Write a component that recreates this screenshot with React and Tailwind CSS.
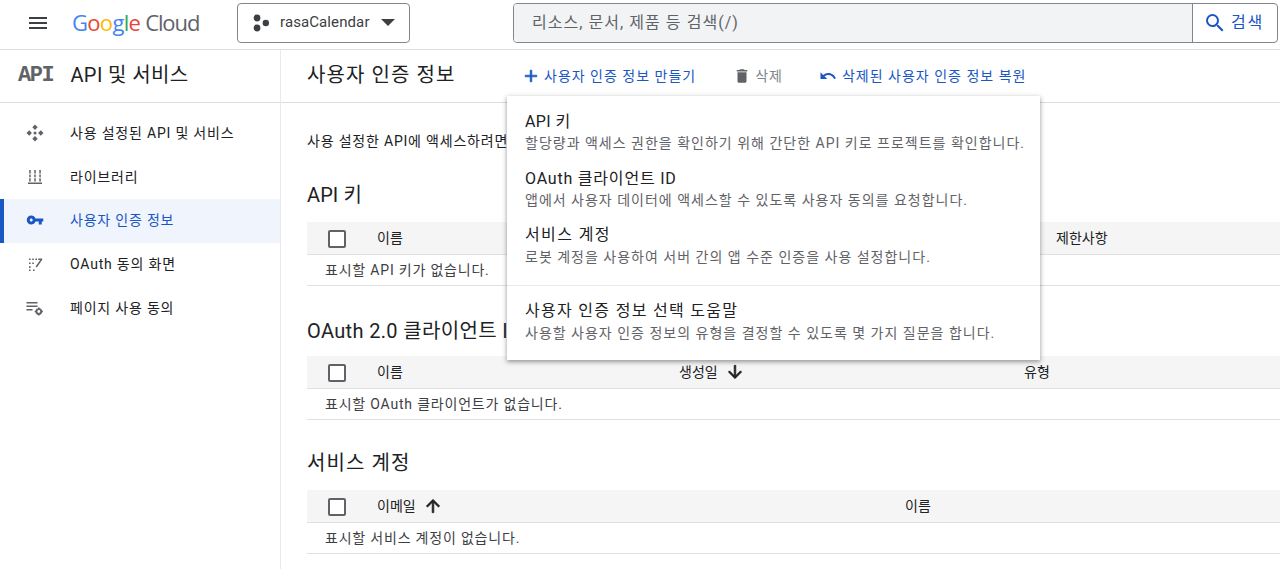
import React from 'react';

const font = "font-['Roboto','Noto_Sans_CJK_KR',sans-serif]";

const navItems = [
  { label: '사용 설정된 API 및 서비스', icon: 'api' },
  { label: '라이브러리', icon: 'library' },
  { label: '사용자 인증 정보', icon: 'key', active: true, cls: 'pb-[2px]' },
  { label: 'OAuth 동의 화면', icon: 'consent', cls: 'pb-[2px]' },
  { label: '페이지 사용 동의', icon: 'settings', cls: 'pb-[2px]' },
];

const menuItems = [
  { title: 'API 키', titleCls: 'tracking-[0.4px]', desc: '할당량과 액세스 권한을 확인하기 위해 간단한 API 키로 프로젝트를 확인합니다.', cls: 'h-[57px] pt-[14px]' },
  { title: 'OAuth 클라이언트 ID', titleCls: 'tracking-[0.8px]', desc: '앱에서 사용자 데이터에 액세스할 수 있도록 사용자 동의를 요청합니다.', cls: 'h-[57px] pt-[14px]' },
  { title: '서비스 계정', titleCls: 'tracking-[1.4px] mb-[1px]', desc: '로봇 계정을 사용하여 서버 간의 앱 수준 인증을 사용 설정합니다.', cls: 'h-[75px] pt-[13px]' },
];

function Mi({ d, size = 18, bold = false, className = '' }) {
  return (
    <svg width={size} height={size} viewBox="0 0 24 24" fill="currentColor" className={`shrink-0 ${bold ? 'stroke-current stroke-[0.8]' : ''} ${className}`}>
      <path d={d} />
    </svg>
  );
}

const icons = {
  menu: 'M3 18h18v-2H3v2zm0-5h18v-2H3v2zm0-7v2h18V6H3z',
  search: 'M15.5 14h-.79l-.28-.27A6.471 6.471 0 0 0 16 9.5 6.5 6.5 0 1 0 9.5 16c1.61 0 3.09-.59 4.23-1.57l.27.28v.79l5 4.99L20.49 19l-4.99-5zm-6 0C7.01 14 5 11.99 5 9.5S7.01 5 9.5 5 14 7.01 14 9.5 11.99 14 9.5 14z',
  add: 'M19 13h-6v6h-2v-6H5v-2h6V5h2v6h6v2z',
  trash: 'M6 19c0 1.1.9 2 2 2h8c1.1 0 2-.9 2-2V7H6v12zM19 4h-3.5l-1-1h-5l-1 1H5v2h14V4z',
  undo: 'M12.5 8c-2.65 0-5.05.99-6.9 2.6L2 7v9h9l-3.62-3.62c1.39-1.16 3.16-1.88 5.12-1.88 3.54 0 6.55 2.31 7.6 5.5l2.37-.78C21.08 11.03 17.15 8 12.5 8z',
  key: 'M12.65 10C11.83 7.67 9.61 6 7 6c-3.31 0-6 2.69-6 6s2.69 6 6 6c2.61 0 4.83-1.67 5.65-4H17v4h4v-4h2v-4H12.65zM7 14c-1.1 0-2-.9-2-2s.9-2 2-2 2 .9 2 2-.9 2-2 2z',
  down: 'M20 12l-1.41-1.41L13 16.17V4h-2v12.17l-5.58-5.59L4 12l8 8 8-8z',
  up: 'M4 12l1.41 1.41L11 7.83V20h2V7.83l5.58 5.59L20 12l-8-8-8 8z',
};

function NavIcon({ name }) {
  if (name === 'api') {
    return (
      <svg width="18" height="18" viewBox="0 0 18 18" fill="#5f6368">
        <path d="M9 .5l2.7 2.7L9 5.9 6.3 3.2zM9 12.1l2.7 2.7L9 17.5l-2.7-2.7zM3.2 6.3L5.9 9l-2.7 2.7L.5 9zM14.8 6.3L17.5 9l-2.7 2.7L12.1 9z" />
        <circle cx="9" cy="9" r="1.5" />
      </svg>
    );
  }
  if (name === 'library') {
    return (
      <svg width="18" height="18" viewBox="0 0 18 18" fill="#5f6368">
        <path d="M2 14.5h14v1.5H2zM3.2 2h1.5v3.5H3.2zM3.2 6.5h1.5v2.8H3.2zM3.2 10.3h1.5v3.2H3.2zM8.25 2h1.5v3.5h-1.5zM8.25 6.5h1.5v2.8h-1.5zM8.25 10.3h1.5v3.2h-1.5zM13.3 2h1.5v3.5h-1.5zM13.3 6.5h1.5v2.8h-1.5zM13.3 10.3h1.5v3.2h-1.5z" />
      </svg>
    );
  }
  if (name === 'key') return <Mi d={icons.key} className="text-[#1a56c4]" />;
  if (name === 'consent') {
    return (
      <svg width="18" height="18" viewBox="0 0 18 18" fill="#5f6368">
        <path d="M3 3.5h1.6v1.6H3zM6.2 3.5h1.6v1.6H6.2zM9.4 3.5H11v1.6H9.4zM3 7.4h1.6V9H3zM6.2 7.4h1.6V9H6.2zM3 11.3h1.6v1.6H3zM3 14.4h1.6V16H3zM14.6 3.5h1.6v1.3l-5.4 7.6-1.2-.9 4.6-6.4h-2V3.5zM7 14.4h1.6V16H7z" />
      </svg>
    );
  }
  return (
    <svg width="18" height="18" viewBox="0 0 18 18" fill="#5f6368">
      <path d="M.5 3h11v1.5H.5zM.5 6.5h11V8H.5zM.5 10h6v1.5h-6z" />
      <circle cx="12.8" cy="12.5" r="2.4" fill="none" stroke="#5f6368" strokeWidth="1.9" />
      <path d="M12 8.4h1.6v1.7H12zM12 14.9h1.6v1.7H12zM8.7 11.7h1.7v1.6H8.7zM15.2 11.7h1.7v1.6h-1.7z" />
    </svg>
  );
}

function Checkbox() {
  return <span className="block w-[18px] h-[18px] border-2 border-[#5f6368] rounded-[2px] bg-white" />;
}

function HeaderRow({ cols, children }) {
  return (
    <div className={`grid ${cols} items-center h-[33px] bg-[#f5f5f5] border-b border-[#e0e0e0] text-[14px] text-[#202124]`}>
      <div className="pl-[21px] pt-[1px]"><Checkbox /></div>
      {children}
    </div>
  );
}

function EmptyRow({ children }) {
  return (
    <div className="h-[31px] flex items-center pl-[18px] text-[14px] tracking-[0.8px] text-[#3c4043] border-b border-[#e0e0e0]">
      {children}
    </div>
  );
}

export default function App() {
  return (
    <div className={`${font} relative w-[1280px] h-[569px] overflow-hidden bg-white text-[#202124]`}>
      <header className="h-[50px] pb-[4px] flex items-center border-b border-[#dadce0]">
        <Mi d={icons.menu} size={24} className="ml-[26px] text-[#3c4043]" />
        <div className="ml-[22px] w-[165px] flex items-baseline font-['Open_Sans',sans-serif] text-[22px] tracking-[-0.7px] pb-[1px]">
          <span className="text-[#4285f4]">G</span>
          <span className="text-[#ea4335]">o</span>
          <span className="text-[#fbbc04]">o</span>
          <span className="text-[#4285f4]">g</span>
          <span className="text-[#34a853]">l</span>
          <span className="text-[#ea4335]">e</span>
          <span className="ml-[5px] text-[#5f6368] tracking-[-1.1px]">Cloud</span>
        </div>
        <button className="h-[40px] w-[173px] shrink-0 flex items-center border border-[#80868b] rounded-[4px] pl-[15px] text-[15px] tracking-[0.1px] text-[#3c4043]">
          <svg width="17" height="18" viewBox="0 0 17 18" fill="#3c4043" className="shrink-0">
            <circle cx="4" cy="4" r="3.4" />
            <circle cx="4" cy="14" r="3.4" />
            <circle cx="12.8" cy="9" r="3.2" />
          </svg>
          <span className="ml-[10px]">rasaCalendar</span>
          <span className="ml-[11px] w-0 h-0 border-x-[7px] border-x-transparent border-t-[7px] border-t-[#3c4043]" />
        </button>
        <div className="ml-[103px] h-[40px] w-[765px] shrink-0 flex border border-[#80868b] rounded-[4px] overflow-hidden">
          <div className="flex-1 bg-[#f1f3f4] border-r border-[#80868b] flex items-center pl-[18px] text-[16px] tracking-[1.05px] text-[#5f6368]">
            리소스, 문서, 제품 등 검색(/)
          </div>
          <div className="w-[84px] flex items-center pl-[10px] text-[#1a56c4] text-[16px] tracking-[1.7px]">
            <Mi d={icons.search} size={24} />
            <span className="ml-[4px]">검색</span>
          </div>
        </div>
      </header>

      <div className="flex h-[519px]">
        <aside className="w-[281px] shrink-0 border-r border-[#e8eaed]">
          <div className="h-[53px] pb-[2px] flex items-center border-b border-[#dadce0]">
            <span className="ml-[18px] font-['Liberation_Mono',monospace] font-bold text-[22px] tracking-[-1.4px] text-[#5f6368]">API</span>
            <span className="ml-[17px] text-[20px] tracking-[0.4px]">API 및 서비스</span>
          </div>
          <nav className="pt-[8px]">
            {navItems.map((item) => (
              <div
                key={item.label}
                className={`h-[44px] flex items-center text-[14px] tracking-[0.8px] ${item.cls || ''} ${item.active ? 'bg-[#f0f4fd] text-[#1a56c4] border-l-[4px] border-[#1a56c4]' : 'pl-[4px]'}`}
              >
                <span className="ml-[22px] w-[18px] h-[18px] flex"><NavIcon name={item.icon} /></span>
                <span className="ml-[26px]">{item.label}</span>
              </div>
            ))}
          </nav>
        </aside>

        <main className="flex-1 min-w-0">
          <div className="h-[53px] flex items-center border-b border-[#dadce0] pl-[26px]">
            <h1 className="w-[214px] pb-[3px] text-[20px] tracking-[1.1px]">사용자 인증 정보</h1>
            <div className="flex items-center text-[14px] tracking-[1px] text-[#1a56c4]">
              <Mi d={icons.add} size={20} bold />
              <span className="ml-[3px]">사용자 인증 정보 만들기</span>
            </div>
            <div className="ml-[37px] flex items-center text-[14px] tracking-[1px] text-[#80868b]">
              <Mi d={icons.trash} className="text-[#5f6368]" />
              <span className="ml-[4px]">삭제</span>
            </div>
            <div className="ml-[36px] flex items-center text-[14px] tracking-[1px] text-[#1a56c4]">
              <Mi d={icons.undo} />
              <span className="ml-[5px]">삭제된 사용자 인증 정보 복원</span>
            </div>
          </div>

          <div className="pl-[26px]">
            <p className="pt-[28px] h-[76px] text-[14px] tracking-[0.8px] whitespace-nowrap">사용 설정한 API에 액세스하려면 사용자 인증 정보를 만드세요.</p>

            <h2 className="h-[43px] text-[20px] tracking-[0.1px] leading-[32px]">API 키</h2>
            <HeaderRow cols="grid-cols-[70px_679px_1fr]">
              <span>이름</span>
              <span>제한사항</span>
            </HeaderRow>
            <EmptyRow>표시할 API 키가 없습니다.</EmptyRow>

            <h2 className="h-[70px] pt-[29px] text-[20px] tracking-[0.35px] leading-[32px] whitespace-nowrap">OAuth 2.0 클라이언트 ID</h2>
            <HeaderRow cols="grid-cols-[70px_302px_345px_1fr]">
              <span>이름</span>
              <span className="flex items-center">생성일<Mi d={icons.down} size={20} bold className="ml-[7px]" /></span>
              <span>유형</span>
            </HeaderRow>
            <EmptyRow>표시할 OAuth 클라이언트가 없습니다.</EmptyRow>

            <h2 className="h-[70px] pt-[27px] text-[20px] tracking-[1.1px] leading-[32px]">서비스 계정</h2>
            <HeaderRow cols="grid-cols-[70px_528px_1fr]">
              <span className="flex items-center">이메일<Mi d={icons.up} size={20} bold className="ml-[7px]" /></span>
              <span>이름</span>
            </HeaderRow>
            <EmptyRow>표시할 서비스 계정이 없습니다.</EmptyRow>
          </div>
        </main>
      </div>

      <div className="absolute left-[507px] top-[96px] w-[533px] h-[264px] bg-white shadow-[0_2px_4px_rgba(60,64,67,0.4),0_1px_6px_rgba(60,64,67,0.2)]">
        {menuItems.map((m) => (
          <div key={m.title} className={`${m.cls} px-[18px]`}>
            <div className={`text-[16px] leading-[23px] ${m.titleCls}`}>{m.title}</div>
            <div className="text-[14px] tracking-[1px] leading-[20px] text-[#5f6368] whitespace-nowrap">{m.desc}</div>
          </div>
        ))}
        <div className="border-t border-[#e8eaed] px-[18px] pt-[13px]">
          <div className="text-[16px] tracking-[1.3px] leading-[24px]">사용자 인증 정보 선택 도움말</div>
          <div className="text-[14px] tracking-[1px] leading-[20px] text-[#5f6368] whitespace-nowrap">사용할 사용자 인증 정보의 유형을 결정할 수 있도록 몇 가지 질문을 합니다.</div>
        </div>
      </div>
    </div>
  );
}
